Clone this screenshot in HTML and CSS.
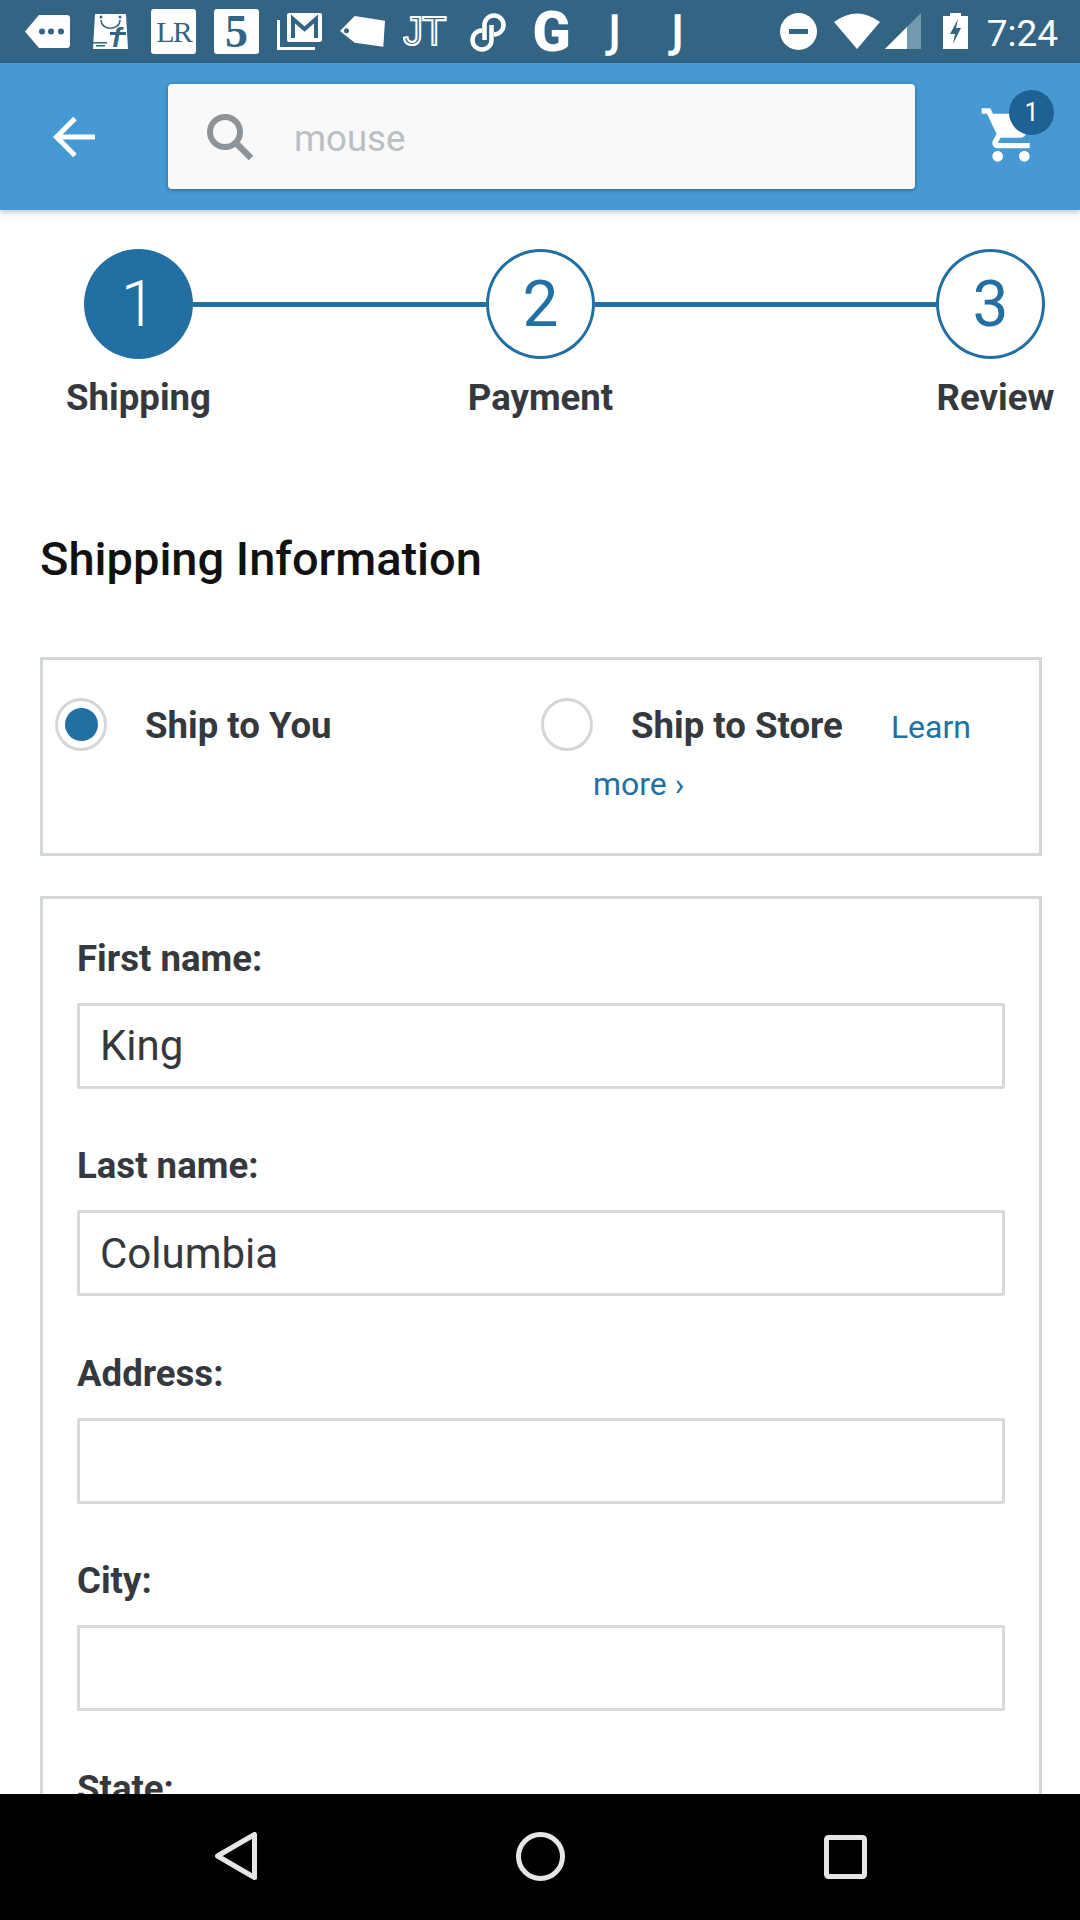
FILE: index.html
```html
<!DOCTYPE html>
<html lang="en">
  <head>
    <meta charset="UTF-8" />
    <meta name="viewport" content="width=device-width, initial-scale=1.0" />
    <title>Shipping Information</title>
    <link rel="stylesheet" href="styles.css">
  </head>
  <body>
    <div class="phone">
      <div class="status-bar">
        <div class="notif-icons">
          <svg class="notif" viewBox="0 0 45 45">
            <path fill="#fff" d="M14 6H42a3 3 0 0 1 3 3V36a3 3 0 0 1-3 3H14L0 22.500Z" />
            <circle cx="17" cy="22.500" r="3" fill="#336484" />
            <circle cx="26" cy="22.500" r="3" fill="#336484" />
            <circle cx="36" cy="22.500" r="3" fill="#336484" />
          </svg>
          <svg class="notif" viewBox="0 0 45 45">
            <path fill="#fff" d="M7 5H38L40 40H5Z" />
            <circle cx="13" cy="8" r="1.500" fill="#336484" />
            <circle cx="32" cy="8" r="1.500" fill="#336484" />
            <path fill="none" stroke="#336484" stroke-width="1.500" d="M13 11c0 11 19 11 19 0" />
            <path fill="#336484" d="M5 33h14v1.500H5zM8 36h9v1.500H8zM22 23h16v3H22z" />
            <text class="flip-f" x="24" y="38">f</text>
          </svg>
          <div class="notif tile tile-lr">LR</div>
          <div class="notif tile tile-five">5</div>
          <svg class="notif" viewBox="0 0 45 45">
            <path fill="none" stroke="#fff" stroke-width="3" d="M1.500 11V39.500H38" />
            <rect x="10" y="4" width="35" height="29" rx="2" fill="#fff" />
            <path fill="none" stroke="#336484" stroke-width="4" d="M16 29V10L27.500 20 39 10V29" />
          </svg>
          <svg class="notif" viewBox="0 0 45 45">
            <path fill="#fff" d="M0 22L14.700 7 45 11.700 43.300 37.700 14.700 33.700Z" />
            <circle cx="6.500" cy="21.700" r="2.500" fill="#336484" />
          </svg>
          <svg class="notif" viewBox="0 0 45 45">
            <text class="jt-mark" x="0" y="36">JT</text>
          </svg>
          <svg class="notif" viewBox="0 0 45 45">
            <path fill="none" stroke="#fff" stroke-width="4.500" d="M18.500 31V16a9.500 9.500 0 1 1 9.500 9.500M25.500 16V31a9.500 9.500 0 1 1-9.500-9.500" />
          </svg>
          <div class="notif glyph glyph-g">G</div>
          <div class="notif glyph glyph-j">J</div>
          <div class="notif glyph glyph-j">J</div>
        </div>
        <div class="sys-icons">
          <svg class="sys-dnd" width="37" height="37" viewBox="0 0 37 37">
            <circle cx="18.500" cy="18.500" r="18.500" fill="#fff" />
            <rect x="9" y="16" width="19" height="5" fill="#336484" />
          </svg>
          <svg class="sys-wifi" width="46" height="36" viewBox="0 0 46 36">
            <path fill="#fff" d="M0 9Q23-8 46 9L23 36Z" />
          </svg>
          <svg class="sys-signal" width="36" height="36" viewBox="0 0 36 36">
            <path fill="#7399ae" d="M36 0V36H0Z" />
            <path fill="#fff" d="M22 14V36H0Z" />
          </svg>
          <svg class="sys-battery" width="25" height="36" viewBox="0 0 25 36">
            <path fill="#fff" d="M7 0H18V3H25V36H0V3H7Z" />
            <path fill="#336484" d="M15 6L7 21H12L10 31 18 15H13Z" />
          </svg>
          <span class="clock">7:24</span>
        </div>
      </div>

      <header class="app-bar">
        <svg class="back-arrow" width="42" height="42" viewBox="0 0 42 42">
          <path fill="none" stroke="#fff" stroke-width="5" d="M42 21H4M22 2.500L3.500 21 22 39.500" />
        </svg>
        <div class="search-box">
          <svg width="46" height="46" viewBox="0 0 46 46">
            <circle cx="18" cy="18" r="15" fill="none" stroke="#8d9499" stroke-width="6" />
            <path stroke="#8d9499" stroke-width="6.500" d="M29 29L44 44" />
          </svg>
          <span class="search-text">mouse</span>
        </div>
        <div class="cart">
          <svg width="64" height="64" viewBox="0 0 24 24">
            <path fill="#fff" d="M7 18c-1.100 0-1.990.9-1.990 2S5.900 22 7 22s2-.9 2-2-.9-2-2-2zM1 2v2h2l3.600 7.590-1.350 2.450c-.16.280-.25.610-.25.960 0 1.100.9 2 2 2h12v-2H7.420c-.14 0-.25-.11-.25-.25l.03-.12.9-1.630h7.450c.75 0 1.410-.41 1.750-1.030l3.580-6.490c.08-.14.120-.31.120-.48 0-.55-.45-1-1-1H5.210l-.94-2H1zm16 16c-1.100 0-1.990.9-1.990 2s.89 2 1.990 2 2-.9 2-2-.9-2-2-2z" />
          </svg>
          <span class="cart-badge">1</span>
        </div>
      </header>

      <main class="content">
        <div class="steps">
          <div class="step">
            <div class="step-num step-num-active">1</div>
            <div class="step-label">Shipping</div>
          </div>
          <div class="step-line step-line-first"></div>
          <div class="step">
            <div class="step-num">2</div>
            <div class="step-label">Payment</div>
          </div>
          <div class="step-line"></div>
          <div class="step">
            <div class="step-num">3</div>
            <div class="step-label step-label-last">Review</div>
          </div>
        </div>

        <h1 class="section-title">Shipping Information</h1>

        <div class="panel ship-options">
          <div class="ship-option ship-option-you">
            <span class="radio radio-on"></span>
            <div class="ship-text"><b>Ship to You</b></div>
          </div>
          <div class="ship-option ship-option-store">
            <span class="radio"></span>
            <div class="ship-text"><b>Ship to Store</b><a class="learn-more" href="#">Learn more ›</a></div>
          </div>
        </div>

        <form class="panel address-form">
          <div class="field">
            <label for="firstName">First name:</label>
            <input id="firstName" type="text" value="King" />
          </div>
          <div class="field">
            <label for="lastName">Last name:</label>
            <input id="lastName" type="text" value="Columbia" />
          </div>
          <div class="field">
            <label for="address">Address:</label>
            <input id="address" type="text" />
          </div>
          <div class="field">
            <label for="city">City:</label>
            <input id="city" type="text" />
          </div>
          <div class="field">
            <label for="state">State:</label>
            <input id="state" type="text" />
          </div>
        </form>
      </main>

      <nav class="nav-bar">
        <svg class="nav-back" width="42" height="48" viewBox="0 0 42 48">
          <path fill="none" stroke="#e6e6e6" stroke-width="5" stroke-linejoin="round" d="M39.500 2.500V45.500L2.500 24Z" />
        </svg>
        <svg class="nav-home" width="49" height="49" viewBox="0 0 49 49">
          <circle cx="24.500" cy="24.500" r="22" fill="none" stroke="#e6e6e6" stroke-width="5" />
        </svg>
        <svg class="nav-recent" width="43" height="44" viewBox="0 0 43 44">
          <rect x="2.500" y="2.500" width="38" height="39" rx="2" fill="none" stroke="#e6e6e6" stroke-width="5" />
        </svg>
      </nav>
    </div>
  </body>
</html>
```

FILE: styles.css
```css
* {
  box-sizing: border-box;
}
body {
  font-family: Roboto, "Liberation Sans", sans-serif;
  margin: 0;
  background-color: #fff;
  color: #35393e;
}
.phone {
  width: 1080px;
  height: 1920px;
  display: flex;
  flex-direction: column;
  overflow: hidden;
}

/* status bar */
.status-bar {
  flex: none;
  height: 63px;
  background-color: #336484;
  display: flex;
  align-items: flex-start;
  justify-content: space-between;
  padding: 9px 22px 0 25px;
  color: #fff;
}
.notif-icons {
  display: flex;
  gap: 18px;
}
.notif {
  width: 45px;
  height: 45px;
  flex: none;
}
.flip-f {
  font-family: "Liberation Sans", sans-serif;
  font-size: 28px;
  font-weight: 700;
  font-style: italic;
  fill: #336484;
}
.tile {
  background-color: #fff;
  border-radius: 3px;
  color: #336484;
  font-family: "Liberation Serif", serif;
  display: flex;
  align-items: center;
  justify-content: center;
}
.tile-lr {
  font-size: 30px;
  letter-spacing: -2px;
}
.tile-five {
  font-size: 46px;
  font-weight: 700;
}
.jt-mark {
  font-family: "Liberation Sans", sans-serif;
  font-size: 40px;
  letter-spacing: -1px;
  fill: none;
  stroke: #fff;
  stroke-width: 2;
}
.glyph {
  display: flex;
  align-items: center;
  justify-content: center;
  color: #fff;
}
.glyph-g {
  font-size: 56px;
  font-weight: 900;
  line-height: 45px;
  padding-top: 2px;
}
.glyph-j {
  font-family: "DejaVu Sans", sans-serif;
  font-size: 43px;
  line-height: 45px;
  -webkit-text-stroke: 1.5px #fff;
}
.sys-icons {
  display: flex;
  align-items: flex-start;
  padding-top: 4px;
}
.sys-wifi {
  margin-left: 17px;
}
.sys-signal {
  margin-left: 5px;
}
.sys-battery {
  margin-left: 22px;
}
.clock {
  margin-left: 19px;
  font-size: 37px;
  line-height: 42px;
}

/* app bar */
.app-bar {
  flex: none;
  position: relative;
  z-index: 1;
  height: 147px;
  background-color: #4699d2;
  box-shadow: 0 2px 6px rgba(0, 0, 0, 0.25);
  display: flex;
  align-items: center;
  padding-left: 53px;
}
.back-arrow {
  flex: none;
}
.search-box {
  margin-left: 73px;
  width: 747px;
  height: 105px;
  background-color: #f9f9f9;
  border-radius: 4px;
  box-shadow: 0 1px 4px rgba(0, 0, 0, 0.35);
  display: flex;
  align-items: center;
  padding-left: 39px;
}
.search-text {
  margin-left: 41px;
  margin-top: 3px;
  font-size: 36.600px;
  color: #babfc4;
}
.cart {
  position: relative;
  margin-left: 64px;
  margin-top: -3px;
  width: 64px;
  height: 64px;
}
.cart-badge {
  position: absolute;
  top: -13px;
  left: 30px;
  width: 45px;
  height: 45px;
  border-radius: 50%;
  background-color: #1e6194;
  color: #fff;
  font-size: 25px;
  line-height: 45px;
  text-align: center;
}

/* page */
.content {
  flex: 1;
  min-height: 0;
  overflow: hidden;
}
.steps {
  display: flex;
  margin: 39px 35px 0 84px;
}
.step {
  flex: none;
  width: 109px;
  display: flex;
  flex-direction: column;
  align-items: center;
}
.step-num {
  width: 109px;
  height: 110px;
  border: 3px solid #226fa3;
  border-radius: 50%;
  color: #226fa3;
  font-size: 64px;
  line-height: 106px;
  text-align: center;
}
.step-num-active {
  background-color: #226fa3;
  color: #fff;
  font-weight: 300;
}
.step-label {
  margin-top: 17px;
  font-size: 36.600px;
  font-weight: 700;
  line-height: 44px;
  white-space: nowrap;
}
.step-label-last {
  margin-left: 10px;
}
.step-line {
  flex: 1;
  height: 5px;
  margin-top: 53px;
  background-color: #226fa3;
}
.step-line-first {
  flex: none;
  width: 293px;
}
.section-title {
  margin: 113px 0 0 40px;
  font-size: 47px;
  font-weight: 500;
  line-height: 52px;
  color: #111;
}
.panel {
  margin: 0 38px 0 40px;
  border: 3px solid #d3d7da;
}
.ship-options {
  margin-top: 71.500px;
  height: 199px;
  display: flex;
  padding: 37.500px 0 0 12px;
}
.ship-option {
  display: flex;
  flex: none;
}
.ship-option-you {
  width: 486px;
}
.ship-option-store {
  flex: 1;
}
.radio {
  flex: none;
  width: 52px;
  height: 53px;
  margin-top: 1px;
  border: 3px solid #d3d7da;
  border-radius: 50%;
  display: flex;
  align-items: center;
  justify-content: center;
}
.radio-on::before {
  content: "";
  width: 33px;
  height: 33px;
  border-radius: 50%;
  background-color: #226fa3;
}
.ship-text {
  flex: 1;
  text-indent: 38px;
  font-size: 32px;
  line-height: 57px;
}
.ship-text b {
  font-size: 36.600px;
  font-weight: 700;
}
.learn-more {
  margin-left: 48px;
  color: #226fa3;
  text-decoration: none;
}
.address-form {
  margin-top: 40px;
  padding: 38px 34px 0;
}
.field {
  margin-bottom: 55.500px;
}
.field label {
  display: block;
  font-size: 36.600px;
  font-weight: 700;
  line-height: 44px;
  margin-bottom: 22px;
}
.field input {
  display: block;
  width: 100%;
  height: 86px;
  border: 3px solid #d6dadd;
  border-radius: 2px;
  padding: 0 20px;
  font-family: Roboto, "Liberation Sans", sans-serif;
  font-size: 42px;
  color: #35393e;
  background-color: #fff;
}

/* android nav */
.nav-bar {
  flex: none;
  position: relative;
  height: 126px;
  background-color: #000;
  display: flex;
  align-items: flex-start;
  padding: 38px 0 0 215px;
}
.nav-home {
  margin-left: 259px;
}
.nav-recent {
  margin-left: 259px;
  margin-top: 3px;
}
```
